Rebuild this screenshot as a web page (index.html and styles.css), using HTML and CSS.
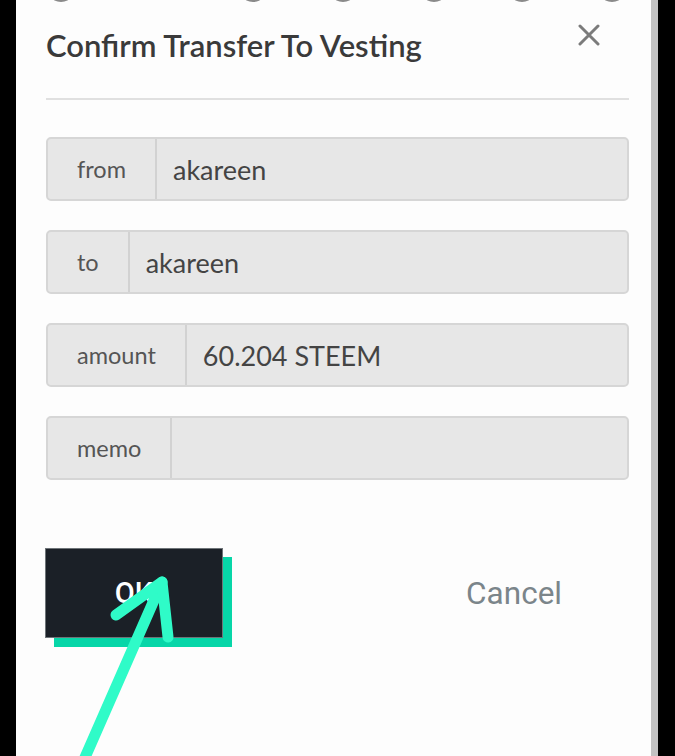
FILE: index.html
```html
<!DOCTYPE html>
<html lang="en">
<head>
<meta charset="utf-8">
<title>Confirm Transfer To Vesting</title>
<link rel="stylesheet" href="styles.css">
</head>
<body>
<div class="screen">
  <div class="edge-left"></div>
  <div class="panel">
    <svg class="peek" width="635" height="6" viewBox="0 0 635 6" aria-hidden="true">
      <ellipse cx="45" cy="-3" rx="9" ry="5" fill="#8a8a8a"/>
      <ellipse cx="237" cy="-3" rx="9" ry="5" fill="#8a8a8a"/>
      <ellipse cx="327" cy="-3" rx="9" ry="5" fill="#8a8a8a"/>
      <ellipse cx="418" cy="-3" rx="9" ry="5" fill="#8a8a8a"/>
      <ellipse cx="506" cy="-3" rx="9" ry="5" fill="#8a8a8a"/>
      <ellipse cx="596" cy="-3" rx="9" ry="5" fill="#8a8a8a"/>
    </svg>
    <div class="modal-header">
      <h2 class="title">Confirm Transfer To Vesting</h2>
      <button class="close" aria-label="Close">
        <svg width="22" height="22" viewBox="0 0 22 22"><path d="M2 2 L20 20 M20 2 L2 20" stroke="#7b7b7b" stroke-width="3" stroke-linecap="round"/></svg>
      </button>
    </div>
    <div class="divider"></div>
    <div class="fields">
      <div class="field"><span class="label">from</span><span class="value">akareen</span></div>
      <div class="field"><span class="label">to</span><span class="value">akareen</span></div>
      <div class="field"><span class="label">amount</span><span class="value">60.204 STEEM</span></div>
      <div class="field"><span class="label">memo</span><span class="value"></span></div>
    </div>
    <div class="actions">
      <button class="ok">OK</button>
      <button class="cancel">Cancel</button>
    </div>
  </div>
  <div class="edge-gray"></div>
  <div class="edge-right"></div>
</div>
<svg class="annotation" width="675" height="756" viewBox="0 0 675 756" aria-hidden="true">
  <path d="M83 762 L162 582" stroke="#2ffbc8" stroke-width="11" stroke-linecap="round" fill="none"/>
  <path d="M116 615 L162 582 L168 637" stroke="#2ffbc8" stroke-width="11" stroke-linecap="round" stroke-linejoin="round" fill="none"/>
</svg>
</body>
</html>
```
FILE: styles.css
```css
html, body {
  margin: 0;
  padding: 0;
  background: #000;
}
body {
  width: 675px;
  height: 756px;
  overflow: hidden;
  position: relative;
  font-family: Lato, "Noto Sans", sans-serif;
}
.screen {
  display: flex;
  height: 756px;
}
.edge-left {
  width: 16px;
  background: #000;
}
.panel {
  width: 635px;
  box-sizing: border-box;
  padding: 0 22px 0 30px;
  background: #fdfdfd;
}
.edge-gray {
  width: 7px;
  background: #c2c2c2;
}
.edge-right {
  flex: 1;
  background: #000;
}
.peek {
  display: block;
  margin-left: -30px;
}
.modal-header {
  display: flex;
  justify-content: space-between;
  align-items: flex-start;
}
.title {
  margin: 22px 0 0 0;
  font-size: 31px;
  line-height: 34px;
  font-weight: 600;
  color: #3a3a3a;
}
.close {
  margin: 18px 29px 0 0;
  padding: 0;
  border: 0;
  background: none;
  width: 22px;
  height: 22px;
}
.close svg {
  display: block;
}
.divider {
  margin-top: 36px;
  height: 2px;
  background: #e0e0e0;
}
.fields {
  margin-top: 37px;
  display: flex;
  flex-direction: column;
  gap: 29px;
}
.field {
  display: flex;
  height: 64px;
  box-sizing: border-box;
  border: 2px solid #d6d6d6;
  border-radius: 5px;
  background: #e7e7e7;
}
.label {
  display: flex;
  align-items: center;
  padding: 0 29px;
  font-size: 23.5px;
  color: #555;
  border-right: 2px solid #d2d2d2;
}
.value {
  display: flex;
  align-items: center;
  padding-left: 16px;
  font-size: 27px;
  color: #444;
}
.actions {
  margin-top: 68px;
  display: flex;
  align-items: center;
}
.ok {
  margin-left: -1px;
  width: 178px;
  height: 90px;
  border: 1px solid #6e7478;
  background: #1b2027;
  box-shadow: 9px 9px 0 #07d6a8;
  color: #fff;
  font-family: Roboto, sans-serif;
  font-size: 29px;
  font-weight: 500;
  padding: 0;
}
.cancel {
  margin-left: auto;
  margin-right: 67px;
  border: 0;
  background: none;
  padding: 0;
  font-family: Roboto, sans-serif;
  font-size: 31.5px;
  color: #7b858a;
}
.annotation {
  position: absolute;
  left: 0;
  top: 0;
  pointer-events: none;
}
```
